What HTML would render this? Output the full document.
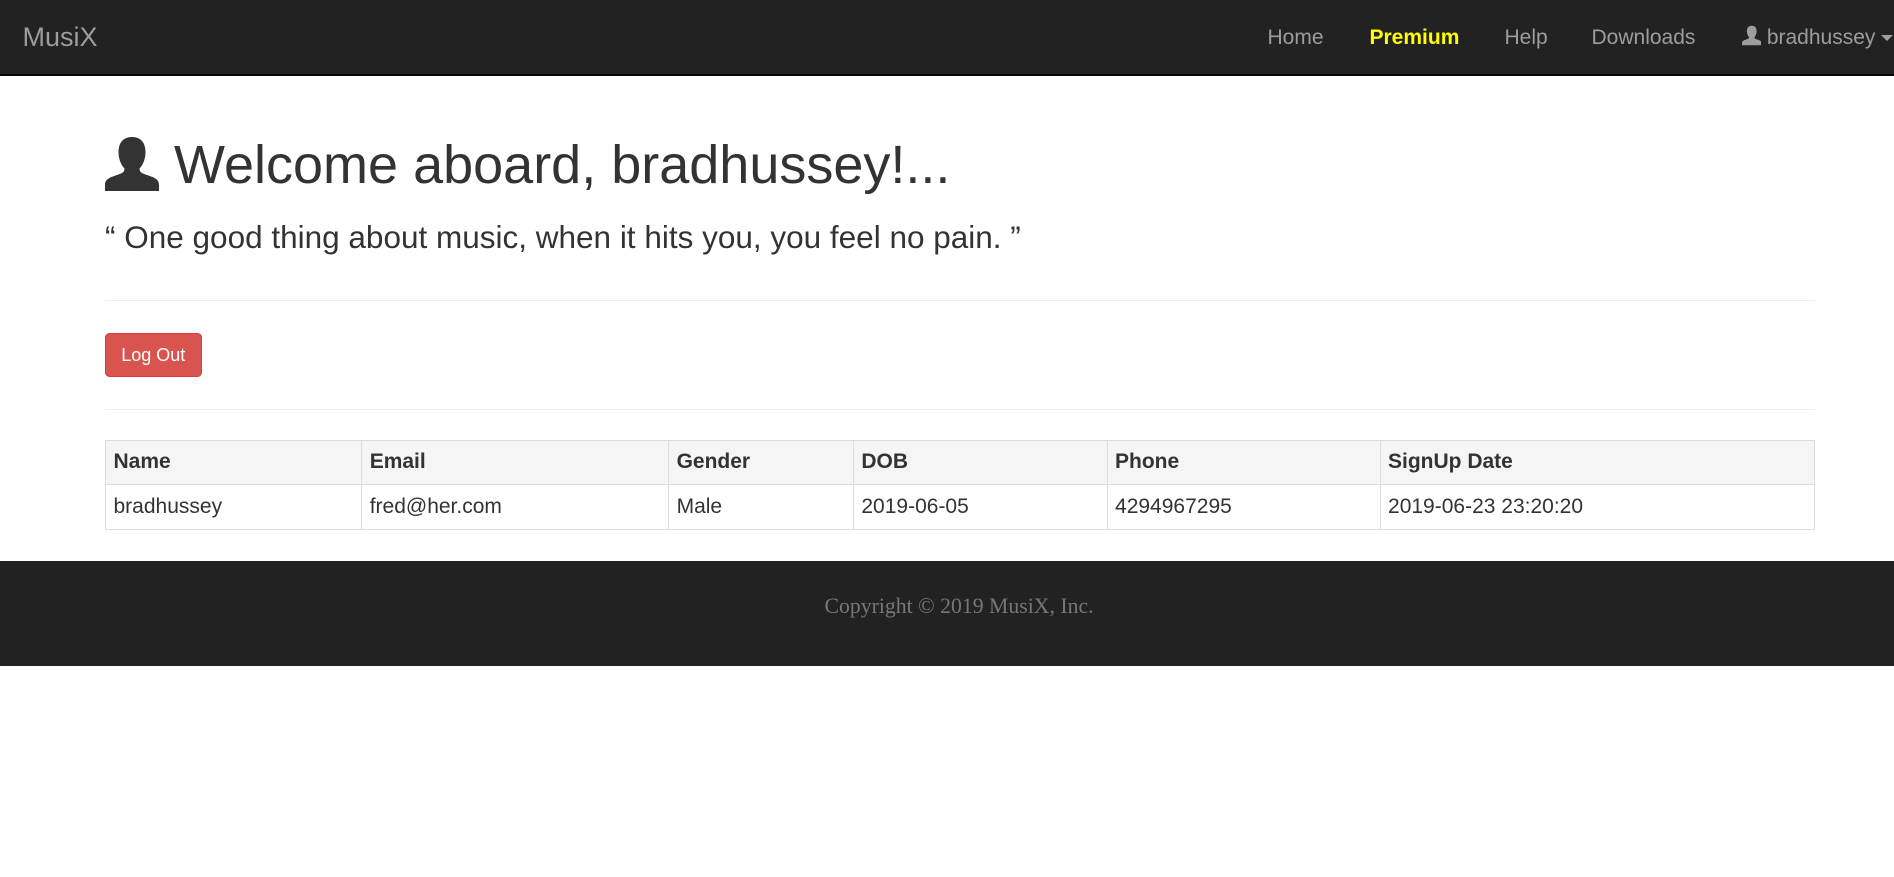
<!DOCTYPE html>
<html><head><meta charset="utf-8"><style>
html,body{margin:0;padding:0;background:#fff}
body{zoom:1.5;width:1262.67px;height:584.67px;position:relative;overflow:hidden;font-family:"Liberation Sans",Arial,sans-serif;color:#333;font-size:14px}
.nav{position:absolute;left:0;top:0;width:100%;height:49px;background:#222;border-bottom:1.4px solid #080808}
.nav span{position:absolute;top:0;line-height:50px;color:#9d9d9d;font-size:14px;white-space:nowrap}
.brand{font-size:18px!important;left:15px}
.abs{position:absolute;white-space:nowrap}
hr{position:absolute;left:70px;width:1140px;margin:0;border:0;border-top:1px solid #eee}
table{position:absolute;left:70px;top:293px;width:1140px;border-collapse:collapse;table-layout:fixed}
td,th{border:1px solid #ddd;padding:5px 5px;line-height:19px;text-align:left;font-size:14px}
th{background:#f5f5f5;font-weight:bold}
.foot{position:absolute;left:0;top:374px;width:100%;height:70px;background:#222}
</style></head><body>
<div class="nav">
<span class="brand">MusiX</span>
<span style="left:845px">Home</span>
<span style="left:913px;color:#ff0;font-weight:bold">Premium</span>
<span style="left:1003px">Help</span>
<span style="left:1061px">Downloads</span>
<span style="left:1161px"><svg width="13" height="14" viewBox="0 0 36 36" style="vertical-align:-1px"><path fill="#9d9d9d" d="M18 0c6 0 9 4 9 10 0 5-2 9-4 11 0 2 1 3 4 4 6 2 9 3 9 7v4H0v-4c0-4 3-5 9-7 3-1 4-2 4-4-2-2-4-6-4-11 0-6 3-10 9-10z"/></svg> bradhussey <span style="position:relative;display:inline-block;width:0;height:0;border-left:4px solid transparent;border-right:4px solid transparent;border-top:4px solid #9d9d9d;vertical-align:middle;line-height:0"></span></span>
</div>
<svg class="abs" style="left:70px;top:91px" width="36" height="36" viewBox="0 0 36 36"><path fill="#333" d="M18 0c6 0 9 4 9 10 0 5-2 9-4 11 0 2 1 3 4 4 6 2 9 3 9 7v4H0v-4c0-4 3-5 9-7 3-1 4-2 4-4-2-2-4-6-4-11 0-6 3-10 9-10z"/></svg>
<div class="abs" style="left:116px;top:85px;font-size:36px;line-height:50px">Welcome aboard, bradhussey!...</div>
<div class="abs" style="left:70px;top:145px;font-size:21px;line-height:26px">“ One good thing about music, when it hits you, you feel no pain. ”</div>
<hr style="top:200px">
<div class="abs" style="left:70px;top:222px;width:63px;height:28px;background:#d9534f;border:1px solid #d43f3a;border-radius:3px;color:#fff;font-size:12px;line-height:28px;text-align:center">Log Out</div>
<hr style="top:272.5px">
<table>
<colgroup><col style="width:170.8px"><col style="width:204.6px"><col style="width:123.2px"><col style="width:169.1px"><col style="width:182px"><col></colgroup>
<tr><th>Name</th><th>Email</th><th>Gender</th><th>DOB</th><th>Phone</th><th>SignUp Date</th></tr>
<tr><td>bradhussey</td><td>fred@her.com</td><td>Male</td><td>2019-06-05</td><td>4294967295</td><td>2019-06-23 23:20:20</td></tr>
</table>
<div class="foot"><div style="text-align:center;color:#777;font-family:'Liberation Serif',Georgia,serif;font-size:14.5px;line-height:60px;padding-left:16px">Copyright © 2019 MusiX, Inc.</div></div>
</body></html>
